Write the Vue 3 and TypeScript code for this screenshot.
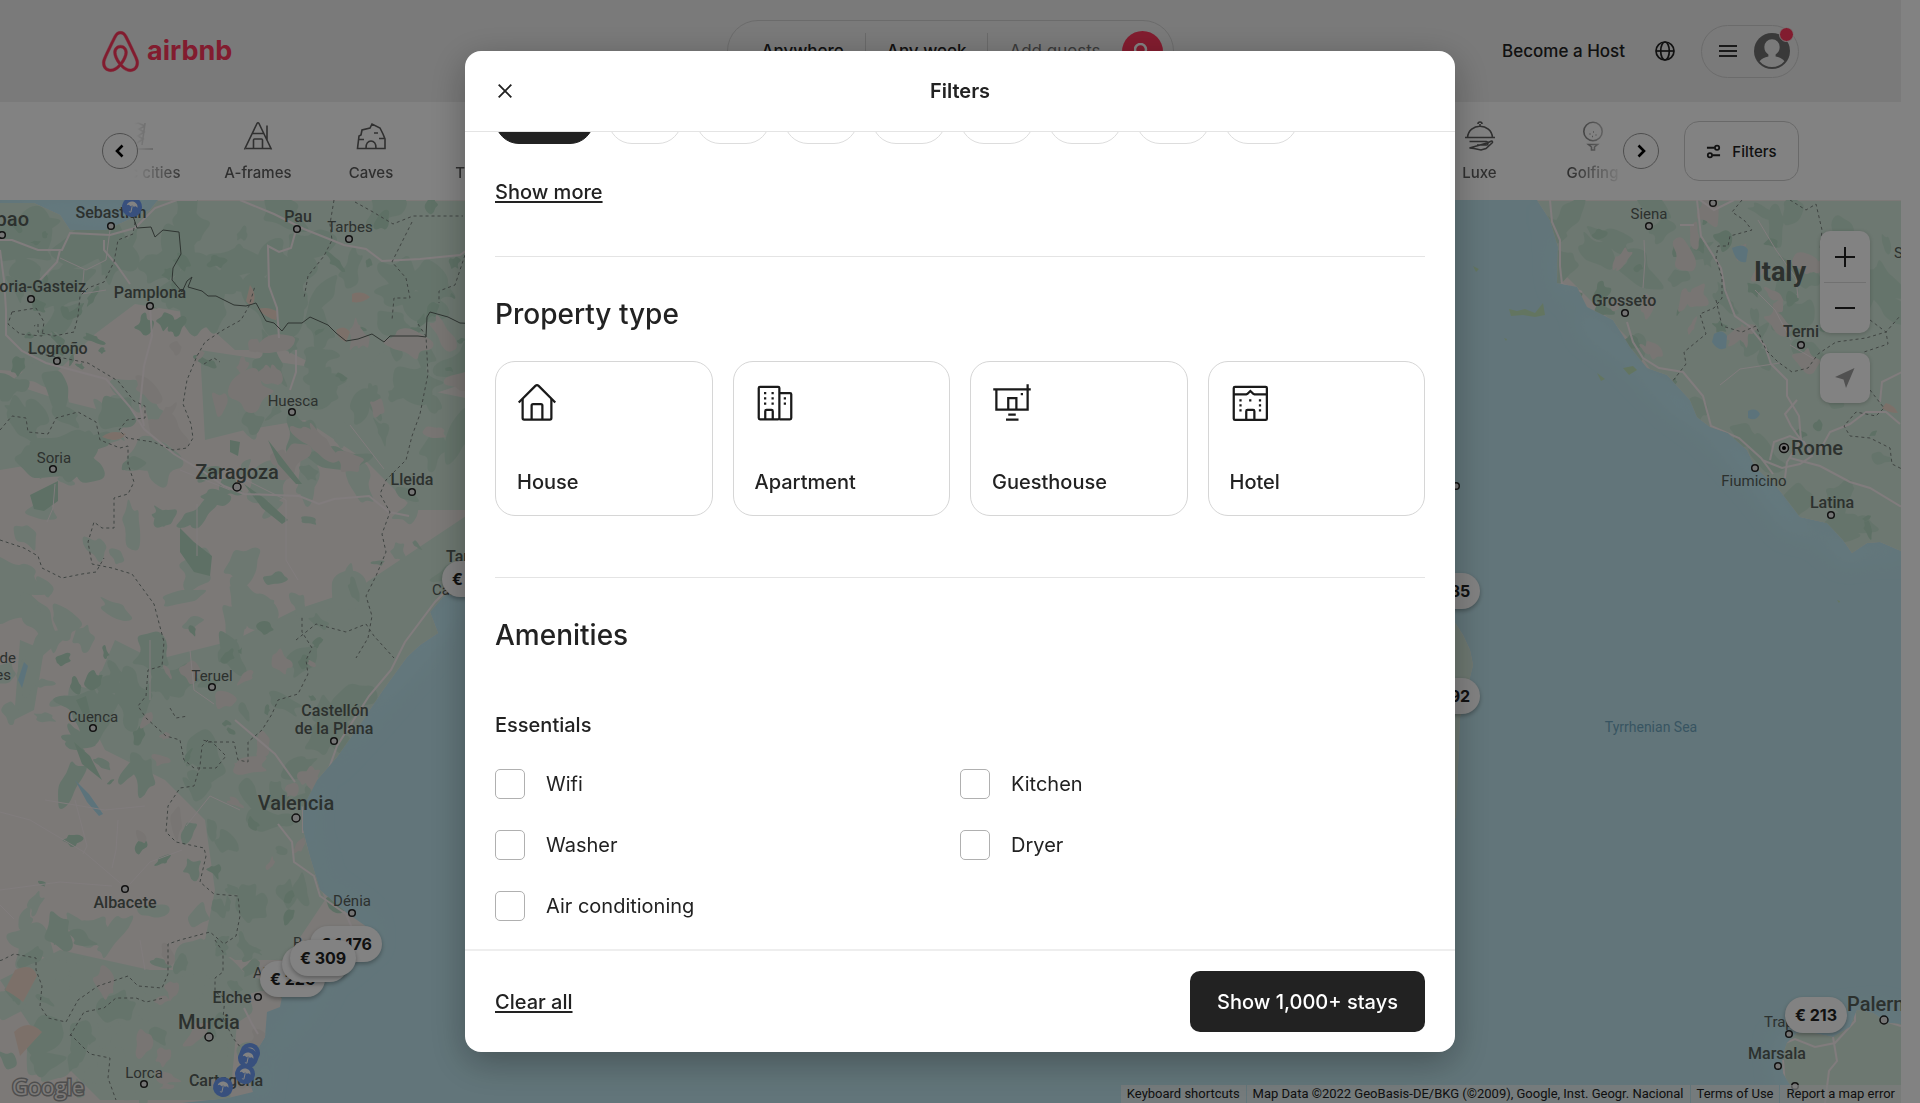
<script setup lang="ts">
import { ref } from 'vue'

type Label = { t: string; x: number; y: number; s?: 'sm' | 'md' | 'lg' | 'xl'; a?: 'start' | 'middle' | 'end' }

/* Small deterministic generator, so the map texture is the same on every load. */
function makeRandom(seed: number) {
  let state = seed
  return () => {
    state = (state * 1664525 + 1013904223) % 4294967296
    return state / 4294967296
  }
}

function blob(rand: () => number, cx: number, cy: number, rx: number, ry: number) {
  const n = 11
  const tilt = rand() * 3
  const pts = Array.from({ length: n }, (_, i) => {
    const angle = (i / n) * Math.PI * 2
    const r = 0.4 + rand() * 0.9
    const px = Math.cos(angle) * rx * r
    const py = Math.sin(angle) * ry * r
    return [
      cx + px * Math.cos(tilt) - py * Math.sin(tilt),
      cy + px * Math.sin(tilt) + py * Math.cos(tilt),
    ]
  })
  const mid = (a: number[], b: number[]) => `${((a[0] + b[0]) / 2).toFixed(1)} ${((a[1] + b[1]) / 2).toFixed(1)}`
  let d = `M${mid(pts[n - 1], pts[0])}`
  pts.forEach((p, i) => {
    d += `Q${p[0].toFixed(1)} ${p[1].toFixed(1)} ${mid(p, pts[(i + 1) % n])}`
  })
  return d + 'Z'
}

function scatter(seed: number, x: number, y: number, w: number, h: number, count: number, size: number) {
  const rand = makeRandom(seed)
  let d = ''
  for (let i = 0; i < count; i++) {
    const r = size * (0.4 + rand())
    d += blob(rand, x + rand() * w, y + rand() * h, r, r * (0.35 + rand() * 0.45))
  }
  return d
}

const woods = [
  { tone: 'meadow', d: scatter(5, 0, 370, 470, 260, 50, 26) },
  { tone: 'meadow', d: scatter(53, 0, 900, 290, 200, 36, 24) },
  { tone: 'meadow', d: scatter(67, 0, 600, 120, 120, 14, 20) },
  { tone: 'forest', d: scatter(11, 0, 200, 470, 120, 46, 26) },
  { tone: 'forest', d: scatter(23, 250, 310, 220, 150, 26, 24) },
  { tone: 'forest', d: scatter(31, 0, 380, 120, 100, 14, 26) },
  { tone: 'forest', d: scatter(41, 120, 460, 350, 180, 20, 14) },
  { tone: 'forest', d: scatter(47, 70, 650, 290, 130, 34, 22) },
  { tone: 'forest', d: scatter(49, 180, 780, 140, 190, 26, 15) },
  { tone: 'forest', d: scatter(59, 0, 930, 290, 160, 26, 18) },
  { tone: 'forest', d: scatter(61, 1550, 200, 350, 340, 66, 22) },
  { tone: 'deep', d: scatter(97, 0, 200, 470, 180, 40, 9) },
  { tone: 'deep', d: scatter(101, 1560, 200, 340, 330, 36, 9) },
  { tone: 'deep', d: scatter(103, 40, 620, 300, 300, 26, 8) },
  { tone: 'sand', d: scatter(71, 1600, 200, 220, 170, 26, 14) },
  { tone: 'sand', d: scatter(73, 130, 320, 340, 140, 24, 18) },
  { tone: 'sand', d: scatter(83, 130, 640, 200, 230, 22, 14) },
  { tone: 'sand', d: scatter(89, 100, 950, 180, 140, 14, 16) },
  { tone: 'clay', d: 'M250 285q6 8 4 16t-8 0zM258 309q10-3 20 3l-2 8q-10-2-18-11zM352 294q10-4 18 3-8 7-18 5zM336 330q8-6 14 2l-4 10q-9-4-10-12zM102 437q10-8 24-3-8 10-24 3zM15 970q18-8 22 6l-14 26q-10-8-18-12zM14 1032q14-14 28 0l-22 24zM1886 403q8 2 12 10-10 0-16-5z' },
]

const roads = [
  'M0 240h12l26 10 24 0 8-17 40 2 25-7 20-20 22-8h20M60 250l-3 12-17 18M0 250l4 30 2 30v25l16 16 24 12 60 16 24 28 14 22 30 25 30 18 20 14 20 8 55 2 20 8 15-5 35-3 20 16 20 4',
  'M104 240l0 10 12 14 14 20M150 306l2 30-8 30-4 40 4 20M240 200l34 14 30 15 40 16 22 4 16 12 38-2 40-4 20-14M296 230l-5 18-12 4-11-6 1 40 8 22 2 30M296 350l0 22-6 18',
  'M465 572l-30 30-30 40-14 28-22 26-32 50-10 28-14 34M303 807l0 26M278 824l14 18 2 20 20 14 6 20 26 18 6 14',
  'M244 1008l8 16 6 10M235 720l40 34 20 28',
]

const minorRoads = [
  'M60 258l26 12 20-10 4-30M84 270l-2 24 24-4M0 905l14 14M130 884l20-22 32-12M350 425l34 44M55 484l-2 24-6 14M140 940l5 30M180 470l50 20M150 640l0 60M190 650l4 40 20 14M45 800l60 10 40-4',
  'M0 812l30 8 54 32 42 36M75 800l12 46-4 8M240 810l-30-14-24 30M246 480l40 20 0 60 12 20M197 504l0 52M0 890l60-8 52 4M118 820l-2 30-4 18',
  'M1758 220l18 30 20 28 2 20M1644 240l1 20-2 28M1755 290l20 20 16 30M1720 385l20-16 40-6M1790 345l24 14',
]

const motorways = [
  'M1550 200l2 22 8 18 0 26 2 18 20 8M1697 200l4 36 20 32 4 22 10 26 14 10 16 20 6 18 16 16 0 16 12 20 2 24-14 22-2 16',
  'M1801 440l-10-14-6-12 12-14M1770 460l4-18 16-6 14 6 8 14-12 8-18 4-20-8M1627 322l6 20 10 16 16 10 24 4 20 24 8 30 28 12 22 20 12 16M1790 458l30 8 30 16 20 6 30 18 16 4M1820 450l10-18 20-8 16-12 20 0 14 12M1880 402l2-20 20-10M1680 225l14 0M1700 200l14 10 20-10',
  'M1785 1043l10-4 20 8 20-4 20-22 0-12M1833 1037l4 24-8 10-4 32M1783 1060l2 26M1888 1022l13 4',
]

const regions = [
  'M135 222l-2 12-15 6-4 22-10 20-16 6-8 8-2 20-4 16-20 4-16-4 0-8-4 2M12 312l24-4 8 14-2 14-22-2-12-10zM28 352l30 5 30 6 30 18 16 20 11 5 0 12-18 2-8 10 8 8 26 4 20 8 14-2 6-10-2-14-8-20 4-24 10-24 8-14 18-12 18-10 8-14 6-20M204 364l10-6 6 4',
  'M0 430l12-14 14 2 2 14 20 2 8-16 22-6 18 10 4 18 20 8 8-2 0 18 6 18-6 12-14 4 0 30-12 0-8-6-6 20 4 22 20 4 20 6 22 30 10 38-2 24-14 4-2 26-8 10 8 12 20 18 14 4 4 20 10 8 22 0 10-12-14-14-10-2M0 540l24 8 14 8 4 12 20 10 20-4 14-2 8-14M170 708l6 10 12-2M208 740l-6 6-2 20-6 20-14 2-12 18-2 26 10 10 28 6 2 8-6 26 14 12 24 2 2 20-4 20-12 8-14-12-30 8-12 4 0 30-6 14-24-2-10-10-30 10-20 14-12 22-18-4-8-12 2-20-6-16 0-12-22-4-12 6-14 4',
  'M208 742l26 0 4 18 10 2 0-20 14-12 10-16 6-14 20-6 10-20-2-14 6-12-10-16 0-16M334 200l-4 24 2 16-8 16-16 20-4 22M355 202l18 10 20 12 20-8 50 0M412 222l-20 40 14 16 4 20-16 0-2 22M465 255l-10 30-16 6 0 12M418 324l8 12 2 38-8 40-8 22-6 24-20 20-6 14 10 18-8 22 4 18-10 24-10 20 6 20-4 22-12 20 M296 640l20-16 30 8 20-8 8 12 20 22',
  'M70 1036l14-24 20-4 12-10 20 0 10 4 18-4M215 940l8 12 0 20-8 6 0 14 10 6-2 20 10 20 8 10M70 1034l20 20 20 4 -2 20 8 22',
  'M1742 200l-10 12 12 8 8 10-22 6-2 10-10 0-2 12 6 20 0 20-8 10-14 6 6 20-22 18 2 12-14 18M1716 300l6 26 20 6 14-6 10 24 12 12 14 10 16-4 10-14 18-12 30-4 20-6 14-16 14 8 20-10M1790 200l16 10 10-6 6 26-2 20M1870 320l16 12 2 12-24 8M1870 390l14 18-8 8-20-4-12 14 6 10 20 2 20 10 2 16 12 6',
]

const labels: Label[] = [
  { t: 'Bilbao', x: 29, y: 226, s: 'lg', a: 'end' },
  { t: 'Sebastián', x: 111, y: 218 },
  { t: 'Pau', x: 298, y: 222 },
  { t: 'Tarbes', x: 350, y: 232, s: 'sm' },
  { t: 'Vitoria-Gasteiz', x: 86, y: 292, a: 'end' },
  { t: 'Pamplona', x: 150, y: 298 },
  { t: 'Logroño', x: 58, y: 354 },
  { t: 'Huesca', x: 293, y: 406, s: 'sm' },
  { t: 'Soria', x: 54, y: 463, s: 'sm' },
  { t: 'Zaragoza', x: 237, y: 479, s: 'lg' },
  { t: 'Lleida', x: 412, y: 485 },
  { t: 'Tarragona', x: 446, y: 562, a: 'start' },
  { t: 'Cambrils', x: 432, y: 595, s: 'sm', a: 'start' },
  { t: 'de', x: 16, y: 663, s: 'sm', a: 'end' },
  { t: 'es', x: 11, y: 680, s: 'sm', a: 'end' },
  { t: 'Teruel', x: 212, y: 681, s: 'sm' },
  { t: 'Cuenca', x: 93, y: 722, s: 'sm' },
  { t: 'Castellón', x: 335, y: 716 },
  { t: 'de la Plana', x: 334, y: 734 },
  { t: 'Valencia', x: 296, y: 810, s: 'lg' },
  { t: 'Albacete', x: 125, y: 908 },
  { t: 'Dénia', x: 352, y: 906, s: 'sm' },
  { t: 'Benidorm', x: 293, y: 948, s: 'sm', a: 'start' },
  { t: 'Alicante', x: 253, y: 978, s: 'sm', a: 'start' },
  { t: 'Elche', x: 232, y: 1003 },
  { t: 'Murcia', x: 209, y: 1029, s: 'lg' },
  { t: 'Lorca', x: 144, y: 1078, s: 'sm' },
  { t: 'Cartagena', x: 226, y: 1086 },
  { t: 'Siena', x: 1649, y: 219, s: 'sm' },
  { t: 'Italy', x: 1780, y: 281, s: 'xl' },
  { t: 'Grosseto', x: 1624, y: 306 },
  { t: 'Terni', x: 1801, y: 337 },
  { t: 'S', x: 1894, y: 258, s: 'sm', a: 'start' },
  { t: 'Rome', x: 1791, y: 455, s: 'lg', a: 'start' },
  { t: 'Fiumicino', x: 1754, y: 486, s: 'sm' },
  { t: 'Latina', x: 1832, y: 508 },
  { t: 'Palermo', x: 1847, y: 1011, s: 'lg', a: 'start' },
  { t: 'Trapani', x: 1764, y: 1027, s: 'sm', a: 'start' },
  { t: 'Marsala', x: 1777, y: 1059 },
]

const towns = [
  [111, 226], [2, 235], [297, 229], [349, 239], [31, 299], [150, 306], [57, 361], [292, 412], [53, 469],
  [412, 492], [212, 687], [93, 728], [334, 741], [125, 889], [352, 913], [258, 997], [144, 1084],
  [1649, 226], [1713, 203], [1625, 313], [1801, 345], [1755, 468], [1831, 515], [1789, 1034], [1778, 1066],
  [1795, 1086], [1456, 486],
]
const cities = [[237, 487], [296, 818], [209, 1037], [1884, 1020]]
const beaches = [[132, 207], [250, 1053], [248, 1058], [245, 1074], [223, 1087]]

const prices = [
  { t: '€ 1,176', x: 310, y: 726 },
  { t: '€ 226', x: 260, y: 761 },
  { t: '€ 249', x: 282, y: 746 },
  { t: '€ 309', x: 290, y: 740 },
  { t: '€ 145', x: 442, y: 361 },
  { t: '€ 185', x: 1418, y: 373 },
  { t: '€ 192', x: 1418, y: 478 },
  { t: '€ 213', x: 1785, y: 797 },
]

const roomCounts = ['1', '2', '3', '4', '5', '6', '7', '8+']
const picked = ref('Any')

const propertyTypes = ['House', 'Apartment', 'Guesthouse', 'Hotel']
const chosenTypes = ref<string[]>([])
function toggleType(name: string) {
  chosenTypes.value = chosenTypes.value.includes(name)
    ? chosenTypes.value.filter((n) => n !== name)
    : [...chosenTypes.value, name]
}

const amenities = ['Wifi', 'Kitchen', 'Washer', 'Dryer', 'Air conditioning']
const checked = ref<string[]>([])
function clearAll() {
  checked.value = []
  chosenTypes.value = []
  picked.value = 'Any'
}
</script>

<template>
  <div class="page">
    <header class="top">
      <div class="side">
        <a class="brand" href="#">
          <svg viewBox="0 0 32 32" width="43" height="43" aria-hidden="true"><path d="M16 1c2.008 0 3.463.963 4.751 3.269l.533 1.025c1.954 3.83 6.114 12.54 7.1 14.836l.145.353c.667 1.591.91 2.472.96 3.396l.01.415.001.228c0 4.062-2.877 6.478-6.357 6.478-2.224 0-4.556-1.258-6.709-3.386l-.257-.26-.172-.179h-.011l-.176.185c-2.044 2.1-4.267 3.42-6.414 3.615l-.28.019-.267.006C5.377 31 2.5 28.584 2.5 24.522l.005-.469c.026-.928.23-1.768.83-3.244l.216-.524c.966-2.298 6.083-12.989 7.707-16.034C12.537 1.963 13.992 1 16 1zm0 2c-1.239 0-2.053.539-2.987 2.21l-.523 1.008c-1.926 3.776-6.06 12.43-7.031 14.692l-.345.836c-.427 1.071-.573 1.655-.605 2.24l-.009.33v.206C4.5 27.395 6.411 29 8.857 29c1.773 0 3.87-1.236 5.831-3.354-2.295-2.938-3.855-6.45-3.855-8.91 0-2.913 1.933-5.386 5.178-5.42 3.223.034 5.156 2.507 5.156 5.42 0 2.456-1.555 5.96-3.855 8.907C19.277 27.766 21.37 29 23.142 29c2.447 0 4.358-1.605 4.358-4.478l-.004-.411c-.019-.672-.17-1.296-.714-2.62l-.248-.6c-1.065-2.478-5.993-12.768-7.538-15.664C18.053 3.539 17.24 3 16 3zm.01 10.316c-2.01.021-3.177 1.514-3.177 3.42 0 1.797 1.18 4.58 2.955 7.044l.21.287.174-.234c1.73-2.385 2.898-5.066 2.989-6.875l.006-.221c0-1.906-1.167-3.4-3.156-3.421z" fill="currentColor" stroke="currentColor" stroke-width=".3" /></svg>
          <span>airbnb</span>
        </a>
      </div>
      <div class="search">
        <button type="button">Anywhere</button>
        <button type="button">Any week</button>
        <button type="button" class="guests">Add guests</button>
        <span class="go">
          <svg viewBox="0 0 32 32" width="16" height="16" aria-hidden="true"><path d="M13 24a11 11 0 1 0 0-22 11 11 0 0 0 0 22zm8-3 9 9" fill="none" stroke="#fff" stroke-width="5" /></svg>
        </span>
      </div>
      <div class="side end">
        <a class="host" href="#">Become a Host</a>
        <button class="globe" type="button" aria-label="Language">
          <svg viewBox="0 0 20 20" width="20" height="20"><g fill="none" stroke="currentColor" stroke-width="1.7"><circle cx="10" cy="10" r="9" /><ellipse cx="10" cy="10" rx="4.3" ry="9" /><path d="M1 10h18" /></g></svg>
        </button>
        <button class="account" type="button" aria-label="Account">
          <svg viewBox="0 0 18 14" width="18" height="14"><path d="M0 2h18M0 7h18M0 12h18" stroke="#333" stroke-width="2" /></svg>
          <svg viewBox="0 0 32 32" width="36" height="36"><circle cx="16" cy="16" r="16" fill="#717171" /><path d="M16 5.5a6.8 6.8 0 0 0-6.8 7c0 3 1.4 5.300 3.600 6.600v1.700c-3.500.700-6.100 2-7.800 4.200a14.200 14.200 0 0 0 22 0c-1.700-2.200-4.300-3.500-7.800-4.200v-1.700c2.200-1.300 3.600-3.600 3.600-6.600a6.800 6.800 0 0 0-6.800-7z" fill="#f0f0f0" /></svg>
          <i class="dot"></i>
        </button>
      </div>
    </header>

    <nav class="categories">
      <div class="scroller">
        <ul>
          <li>
            <svg viewBox="0 0 30 30"><path d="M3 28V5l12-3 7 3M22 2l-3 22M22 5l-6 3 5 3-6 4 5 3-6 4M15 28h15" /></svg>
            Iconic cities
          </li>
          <li>
            <svg viewBox="0 0 30 30"><path d="M1.500 28.500 14 2.500c.5-1 1.500-1 2 0l12.500 26M3 27.500h25M9 12.500h12M24 4.500v15M10.500 27.500v-8.500c0-.6.4-1 1-1h7c.6 0 1 .4 1 1v8.500" /></svg>
            A-frames
          </li>
          <li>
            <svg viewBox="0 0 30 30"><path d="M1.500 27.500 3 15l2-1 1-5 8-2 2-4 8 4 3 6 2 5v9.500zM10 27.500c-1-10 11-10 10 0M18 12h4M23 17.500h5M3 18.500h5" /></svg>
            Caves
          </li>
          <li>
            <svg viewBox="0 0 30 30"><path d="M15 28c2-8 0-12-2-16M13 12c-4-5-9-3-11 2 4-3 8-3 11-2zm0 0c6-5 11-1 12 4-4-4-8-5-12-4z" /></svg>
            Tropical
          </li>
          <li class="later">
            <svg viewBox="0 0 30 30"><path d="M0 16.500h30M2.500 16.500c1-15 24-15 25 0M15 5V3M13 3a2 2 0 1 1 4 0M4.500 20.500h17c2 0 2 3.500 0 3.500H12M22 22l4-1.800c1.500-.5 2 .8 1 1.800l-6 5.500-5 1.500-7-1.500-4.500-.5z" /></svg>
            Luxe
          </li>
          <li>
            <svg viewBox="0 0 30 30"><circle cx="15" cy="10.500" r="9.200" /><path d="M10.500 23.500h9l-3 2.500v3h-3v-3z" /><path d="M11.500 13h1M15 11h1M17.500 14h1M14 15.500h1" /></svg>
            Golfing
          </li>
        </ul>
        <button class="arrow prev" type="button" aria-label="Previous"><svg viewBox="0 0 14 14" width="14" height="14"><path d="M9.500 1.500 4 7l5.500 5.500" /></svg></button>
        <button class="arrow next" type="button" aria-label="Next"><svg viewBox="0 0 14 14" width="14" height="14"><path d="M4.500 1.500 10 7l-5.500 5.500" /></svg></button>
      </div>
      <button class="filters" type="button">
        <svg viewBox="0 0 16 16" width="15" height="15"><g fill="none" stroke="currentColor" stroke-width="1.900"><path d="M1 4h8M7 12h8" /><circle cx="11.800" cy="4" r="2.300" /><circle cx="4.200" cy="12" r="2.300" /></g></svg>
        Filters
      </button>
    </nav>

    <main class="map">
      <svg class="chart" viewBox="0 200 1901 903" preserveAspectRatio="xMinYMin slice">
        <defs>
          <clipPath id="land">
            <path d="M0 203h34l26 12 10 15 36 0 44-20 8-10H475V572l-32 25-13 15 8 21-18 12-13 12-24 33-20 30-26 37-20 23-14 27 0 23 7 27 10 33 27 23 20 14-20 30-50 20-15 20-2 10-13 5-2 25-8 13-14 4-1 12 6 12 5 14-25 6-46 5H0z" />
            <path d="M1537 200l13 20 8 27-1 36 20 4 10 20 26 13 17 27 17 21 20 7 23 25 7 17 13 10 18 6 19 17 8 17 22 20 23 30 27 6 16 17 9 13 15-10 13-1 21 9V200z" />
            <path d="M1797 1033l-10 10-5 14 1 16 10 17 14 13h94v-79l-13-1-15-10-16-3-7 17-17 10-20-4z" />
            <path d="M1450 615l13 20 7 15 3 15-3 12-4 20-6 20-4 100-6 10z" />
          </clipPath>
          <filter id="soften" x="-5%" y="-5%" width="110%" height="110%"><feGaussianBlur stdDeviation="10" /></filter>
        </defs>
        <rect y="200" width="1901" height="903" class="sea" />
        <path class="shallow" filter="url(#soften)" d="M0 200h160l-50 32-60-8zM465 572l-60 85-60 90-30 40-6 40 18 62 40 36-60 90-40 40-10 45h4l8-50 50-60 56-50-8-24-44-34-20-56 4-30 50-60 70-80 30-40zM1537 201l18 40 2 42 26 26 44 38 20 24 44 28 20 26 36 24 34 36 22 38 50 24 48 0v10l-30-2-24 8-30-26-30-6-30-40-50-56-36-26-50-50-36-26-14-60zM1780 1100l-6-60 30-16 40-12 40-4 17 10v60z" />
        <g clip-path="url(#land)">
          <rect y="200" width="1901" height="903" class="soil" />
          <path class="meadow" d="M0 201H475V380l-60 20-70-20-60-30-50 0-40-36-60-10-40 30-40 40L0 370zM0 380l60 20 40 10 20 30-60 20L0 470zM200 350l130 20 145 30v110l-60 0-50-50-60-40-60 10-40 10zM475 510v120l-90 80-50 70-30 60 20 60-40 60-50 0-30-20 10-50-10-70-40-40-60-30-20-40 30-70 40 20 80-20 60-30 60-20zM0 980l60-30 90 20 60 0 30 20-10 110H100l-60-60zM20 640l24 10-10 60-20 10zM1530 201h371v360h-120l-150-220-90-90zM1770 1000h131v103h-131zM1440 600h40v230h-40z" />
          <path v-for="(wood, i) in woods" :key="i" :class="wood.tone" :d="wood.d" />
          <path class="deep" d="M30 495l28-14 0 20-14 10-10-2zM230 440l10 2-2 14-8-4zM180 528l14 14 18 14-2 20-16-4-14-20zM268 440l14 18 20 26-6 0-18-20zM244 484l20 14 24 22-6 4-20-16zM76 700l10-4 4 16-6 4zM74 742l16 14 12 24-20-16z" />
          <path class="lake" d="M1732 248q12-6 16 2l-2 12q-10 2-14-14zM1714 334q8-6 13 2l-1 12q-8 4-14-6zM1748 411q8-4 12 3-4 8-12 4zM75 780l14 14 14 20-4 2-12-14zM18 680l6-18 4 4-6 22z" />
          <path v-for="(road, i) in minorRoads" :key="'n' + i" class="road thin" :d="road" />
          <path v-for="(road, i) in roads" :key="'r' + i" class="road" :d="road" />
          <path v-for="(road, i) in motorways" :key="'m' + i" class="road" :d="road" />
          <path v-for="(edge, i) in regions" :key="'e' + i" class="region" :d="edge" />
          <path class="border" d="M133 216l4 12 14-1 4 10 8-7 16 2 2 22-8 14-1 12 10 12 5-11 5-4-4 10 14 4 6 5 8 0 18 9 12 1 10-3 10 18 8 2 8 8 6-8 14 0 8-6 18 8 8 8 10 8 12-2 14-5 12 8 6-6 28 0 8 1 1-20 3-5 18 5 12 6 22 1" />
        </g>
        <path class="islet" d="M1509 309l8 2 8-2 10 4 8-10 2 12-10 2-12-2-12 1zM1473 266l6 3-3 3zM1623 368l10-2 4 4-8 5zM1597 373l8 6-4 2zM1504 338l3 1-1 2zM1837 600l3 1-1 2z" />
        <g class="town">
          <circle v-for="(p, i) in towns" :key="i" :cx="p[0]" :cy="p[1]" r="3.300" />
          <circle v-for="(p, i) in cities" :key="'c' + i" :cx="p[0]" :cy="p[1]" r="4" />
          <circle cx="1784" cy="448" r="4.500" />
        </g>
        <circle cx="1784" cy="448" r="2" />
        <text v-for="label in labels" :key="label.t + label.x" :x="label.x" :y="label.y" :class="['label', label.s ?? 'md']" :text-anchor="label.a ?? 'middle'">{{ label.t }}</text>
        <text class="label water" x="1651" y="732" text-anchor="middle">Tyrrhenian Sea</text>
        <g v-for="(p, i) in beaches" :key="'b' + i" :transform="`translate(${p[0]} ${p[1]}) rotate(12)`">
          <circle r="10" class="beach" />
          <path class="parasol" d="M-5.500-.5c.5-6.500 10.500-6.500 11 0l-2-1-1.800 1L0-1.500l-1.700 1-1.800-1z" />
          <path class="pole" d="M0-1v5.500q-.5 1.500-2 .5" />
        </g>
        <text class="google" x="12" y="1095">Google</text>
      </svg>

      <button v-for="p in prices" :key="p.t" class="price" type="button" :style="{ left: p.x + 'px', top: p.y + 'px' }">{{ p.t }}</button>

      <div class="controls">
        <div class="zoom">
          <button type="button" aria-label="Zoom in"><svg viewBox="0 0 20 20" width="20" height="20"><path d="M0 10h20M10 0v20" /></svg></button>
          <button type="button" aria-label="Zoom out"><svg viewBox="0 0 20 20" width="20" height="20"><path d="M0 10h20" /></svg></button>
        </div>
        <button class="locate" type="button" aria-label="My location"><svg viewBox="0 0 20 20" width="20" height="20"><path d="M19.500 0 0 9l8.500 2.500L11 20z" /></svg></button>
      </div>

      <footer class="credits">
        <a href="#">Keyboard shortcuts</a>
        <span>Map Data ©2022 GeoBasis-DE/BKG (©2009), Google, Inst. Geogr. Nacional</span>
        <a href="#">Terms of Use</a>
        <a href="#">Report a map error</a>
      </footer>
    </main>
  </div>

  <div class="overlay">
    <section class="modal" role="dialog" aria-labelledby="modal-title">
      <header class="modal-head">
        <button class="close" type="button" aria-label="Close"><svg viewBox="0 0 14 14" width="14" height="14"><path d="M.7.7l12.600 12.600M13.300.7.7 13.300" stroke="#222" stroke-width="1.900" /></svg></button>
        <h1 id="modal-title">Filters</h1>
      </header>

      <div class="modal-body">
        <section class="rooms">
          <div class="chips">
            <button class="chip first" :class="{ on: picked === 'Any' }" type="button" aria-label="Any" @click="picked = 'Any'"></button>
            <button v-for="n in roomCounts" :key="n" class="chip" :class="{ on: picked === n }" type="button" :aria-label="n" @click="picked = n"></button>
          </div>
          <button class="link" type="button">Show more</button>
        </section>

        <section class="types">
          <h2>Property type</h2>
          <div class="cards">
            <button v-for="name in propertyTypes" :key="name" class="card" type="button" :aria-pressed="chosenTypes.includes(name)" @click="toggleType(name)">
              <svg viewBox="0 0 32 32" width="40" height="40" aria-hidden="true">
                <g v-if="name === 'House'">
                  <path d="M1.400 15.600 14.700 2.300a1.900 1.900 0 0 1 2.600 0l13.300 13.300" />
                  <path d="M4.500 12.700V28a1.200 1.200 0 0 0 1.200 1.200h20.600a1.200 1.200 0 0 0 1.200-1.200V12.700" />
                  <path d="M11.700 29V18a1.200 1.200 0 0 1 1.200-1.200h6.200a1.200 1.200 0 0 1 1.200 1.200v11" />
                </g>
                <g v-else-if="name === 'Apartment'">
                  <rect x="3" y="3" width="16.500" height="26" rx="1" />
                  <path d="M19.500 8H28a1 1 0 0 1 1 1v19a1 1 0 0 1-1 1h-8.500M8.200 29v-6.500a1 1 0 0 1 1-1h4a1 1 0 0 1 1 1V29" />
                  <path class="pane" d="M7.200 7.200h1.800v1.800H7.200zm6 0H15v1.800h-1.800zm-6 4.200h1.800v1.800H7.200zm6 0H15v1.800h-1.800zm-6 4.200h1.800v1.800H7.200zm6 0H15v1.800h-1.800zm9.800-4.200h1.800v1.800H23zm0 4.200h1.800v1.800H23z" />
                </g>
                <g v-else-if="name === 'Guesthouse'">
                  <path d="M1 5h30M3.500 5v16.300h25V1M13 21v-9h6.500v9M13 25.200h6M11.200 29.200h10" />
                  <path class="pane" d="M23 8h1.800v1.800H23z" />
                </g>
                <g v-else>
                  <rect x="3" y="3" width="26.500" height="26.500" rx="1" />
                  <path d="M3 9h10l1-.300 2.300-2.300 2.300 2.300 1 .300h10M13 29v-6.500a1 1 0 0 1 1-1h4.500a1 1 0 0 1 1 1V29" />
                  <path class="pane" d="M7.500 13h1.800v1.800H7.500zm7.800 0h1.800v1.800h-1.800zm7.800 0h1.800v1.800h-1.800zM7.500 17h1.800v1.800H7.500zm15.600 0h1.800v1.800h-1.800zM7.500 21h1.800v1.800H7.500zm15.600 0h1.800v1.800h-1.800z" />
                </g>
              </svg>
              {{ name }}
            </button>
          </div>
        </section>

        <section class="amenities">
          <h2>Amenities</h2>
          <h3>Essentials</h3>
          <div class="options">
            <label v-for="name in amenities" :key="name"><input v-model="checked" type="checkbox" :value="name" />{{ name }}</label>
          </div>
        </section>
      </div>

      <footer class="modal-foot">
        <button class="link" type="button" @click="clearAll">Clear all</button>
        <button class="show" type="button">Show 1,000+ stays</button>
      </footer>
    </section>
  </div>
</template>

<style>
body {
  margin: 0;
  background: #fff;
}
</style>

<style scoped>
.page,
.overlay {
  font-family: Inter, 'Liberation Sans', sans-serif;
  color: #222;
}
.page *,
.overlay * {
  box-sizing: border-box;
}
.page {
  box-sizing: border-box;
  display: flex;
  flex-direction: column;
  height: 100vh;
  padding-right: 19px;
  overflow: hidden;
}
button {
  padding: 0;
  border: 0;
  background: none;
  color: inherit;
  font: inherit;
  cursor: pointer;
}
a {
  color: inherit;
  text-decoration: none;
}

.top {
  display: flex;
  align-items: center;
  height: 102px;
  padding: 0 102px;
  background: #efefef;
  font-size: 17px;
  font-weight: 500;
}
.side {
  display: flex;
  flex: 1;
  align-items: center;
}
.end {
  justify-content: flex-end;
}
.brand {
  display: flex;
  align-items: center;
  gap: 5px;
  margin-left: -3px;
  color: #ff385c;
  font-size: 27px;
  font-weight: 700;
  line-height: 36px;
}
.search {
  display: flex;
  align-items: center;
  height: 62px;
  padding: 0 10px 0 0;
  border: 1px solid #d2d2d2;
  border-radius: 31px;
}
.search button {
  height: 36px;
  padding: 0 21px;
  border-right: 1px solid #cfcfcf;
}
.search button:first-child {
  padding-left: 33px;
}
.search .guests {
  border: 0;
  color: #717171;
  font-weight: 400;
}
.go {
  display: grid;
  place-items: center;
  width: 41px;
  height: 41px;
  border-radius: 50%;
  background: #ff385c;
}
.globe {
  display: flex;
  margin: 0 26px 0 30px;
}
.account {
  position: relative;
  display: flex;
  align-items: center;
  gap: 17px;
  height: 53px;
  padding: 0 8px 0 17px;
  border: 1px solid #d2d2d2;
  border-radius: 27px;
}
.dot {
  position: absolute;
  top: 1px;
  right: 4px;
  width: 15px;
  height: 15px;
  border: 1px solid #efefef;
  border-radius: 50%;
  background: #ff385c;
}

.categories {
  display: flex;
  align-items: center;
  gap: 25px;
  height: 98px;
  padding: 0 102px;
  font-size: 15px;
  font-weight: 500;
}
.scroller {
  position: relative;
  flex: 1;
  min-width: 0;
}
.scroller ul {
  display: flex;
  gap: 42px;
  margin: 0;
  padding: 2px 31px 0 0;
  overflow: hidden;
  list-style: none;
  mask-image: linear-gradient(90deg, transparent 32px, #000 84px, #000 calc(100% - 90px), transparent calc(100% - 34px));
}
.scroller li {
  display: flex;
  flex: none;
  flex-direction: column;
  align-items: center;
  gap: 12px;
  min-width: 71px;
  color: #5e5e5e;
  line-height: 20px;
}
.scroller li:first-child {
  margin-left: -7px;
}
.scroller .later {
  margin-left: auto;
}
.scroller li svg {
  width: 30px;
  height: 30px;
  fill: none;
  stroke: currentColor;
  stroke-width: 1.6px;
}
.arrow {
  position: absolute;
  top: 14px;
  display: grid;
  place-items: center;
  width: 36px;
  height: 36px;
  border: 1px solid #9a9a9a;
  border-radius: 50%;
}
.arrow path {
  fill: none;
  stroke: #000;
  stroke-width: 2.6px;
}
.prev {
  left: 0;
}
.next {
  right: 0;
}
.filters {
  display: flex;
  align-items: center;
  justify-content: center;
  gap: 11px;
  width: 115px;
  height: 60px;
  border: 1px solid #cfcfcf;
  border-radius: 15px;
}

.map {
  position: relative;
  flex: 1;
  min-height: 0;
  overflow: hidden;
}
.chart {
  display: block;
  width: 100%;
  height: 100%;
}
.sea {
  fill: #c0e6ef;
}
.shallow {
  fill: #c5edf8;
}
.soil {
  fill: #f3eeea;
}
.meadow {
  fill: #d6ebdd;
}
.forest {
  fill: #c7e4d2;
}
.deep {
  fill: #b8dcc6;
}
.sand {
  fill: #ece6e1;
}
.clay {
  fill: #f4dccf;
}
.lake {
  fill: #b4e2f2;
}
.islet {
  fill: #c3e6bd;
}
.road {
  fill: none;
  stroke: #fdf3f5;
  stroke-width: 2px;
}
.thin {
  stroke-width: 1px;
}
.region {
  fill: none;
  stroke: #7d8682;
  stroke-width: 1px;
  stroke-dasharray: 3 3;
}
.border {
  fill: none;
  stroke: #5c6761;
  stroke-width: 1px;
}
.town circle {
  fill: #e6e6e6;
  stroke: #222;
  stroke-width: 1.500px;
}
.label {
  fill: #57605b;
  font-family: Roboto, sans-serif;
  font-size: 16px;
  font-weight: 500;
}
.label.sm {
  font-size: 15px;
  font-weight: 400;
}
.label.lg {
  font-size: 20px;
}
.label.xl {
  font-size: 27px;
  font-weight: 700;
}
.label.water {
  fill: #6fa6c0;
  font-size: 14px;
  font-weight: 400;
}
.beach {
  fill: #6f9ef5;
}
.parasol {
  fill: #fff;
}
.pole {
  fill: none;
  stroke: #fff;
}
.google {
  fill: #f4efec;
  stroke: #9a9a9a;
  stroke-width: 3px;
  paint-order: stroke;
  font-family: 'Open Sans', sans-serif;
  font-size: 22px;
  font-weight: 500;
}
.price {
  position: absolute;
  height: 36px;
  padding: 0 10px;
  border-radius: 18px;
  background: #fff;
  box-shadow: 0 2px 4px rgba(0, 0, 0, 0.3);
  font-size: 16px;
  font-weight: 700;
  white-space: nowrap;
}
.controls {
  position: absolute;
  top: 31px;
  right: 31px;
  display: flex;
  flex-direction: column;
  gap: 20px;
  width: 50px;
}
.zoom,
.locate {
  display: grid;
  border-radius: 10px;
  background: #fff;
  box-shadow: 0 1px 4px rgba(0, 0, 0, 0.2);
}
.zoom {
  padding: 0 4px;
}
.zoom button {
  display: grid;
  place-items: center;
  height: 51px;
}
.zoom button + button {
  border-top: 1px solid #ddd;
}
.zoom path {
  stroke: #222;
  stroke-width: 2px;
}
.locate {
  place-items: center;
  height: 50px;
}
.locate path {
  fill: #a0a0a0;
}
.credits {
  position: absolute;
  right: 0;
  bottom: 0;
  display: flex;
  gap: 1px;
  font-family: Roboto, sans-serif;
  font-size: 13px;
  line-height: 18px;
  white-space: nowrap;
}
.credits > * {
  padding: 0 6px;
  background: rgba(245, 245, 245, 0.7);
}

.overlay {
  position: fixed;
  inset: 0;
  display: flex;
  justify-content: center;
  padding: 51px 24px;
  box-sizing: border-box;
  background: rgba(0, 0, 0, 0.49);
}
.modal {
  display: flex;
  flex-direction: column;
  width: 100%;
  max-width: 990px;
  overflow: hidden;
  border-radius: 16px;
  background: #fff;
  box-shadow: 0 10px 36px rgba(0, 0, 0, 0.3);
  font-size: 20px;
  line-height: 24px;
}
.modal-head {
  display: grid;
  grid-template-columns: 1fr auto 1fr;
  align-items: center;
  height: 81px;
  padding: 0 30px;
  border-bottom: 1px solid #e4e4e4;
}
.modal-head h1 {
  margin: 0;
  font-size: 20px;
  font-weight: 600;
}
.close {
  display: grid;
  place-items: center;
  justify-self: start;
  width: 20px;
  height: 22px;
}
.modal-body {
  flex: 1;
  min-height: 0;
  padding: 0 30px;
  overflow: hidden;
}
.rooms {
  margin-top: -36px;
  padding-bottom: 52px;
}
.chips {
  display: flex;
  gap: 14px;
  margin-bottom: 36px;
}
.chip {
  width: 74px;
  height: 48px;
  border: 1px solid #ddd;
  border-radius: 24px;
}
.chip.first {
  width: 99px;
}
.chip.on {
  border-color: #222;
  background: #222;
}
.link {
  display: block;
  font-weight: 500;
  text-decoration: underline;
  text-decoration-thickness: 2px;
  text-underline-offset: 2px;
}
.types,
.amenities {
  padding-top: 39px;
  border-top: 1px solid #e4e4e4;
}
.types {
  padding-bottom: 61px;
}
h2 {
  margin: 0;
  font-size: 28px;
  font-weight: 500;
  line-height: 36px;
}
.cards {
  display: grid;
  grid-template-columns: repeat(4, 1fr);
  gap: 20px;
  margin-top: 29px;
}
.card {
  display: flex;
  flex-direction: column;
  align-items: flex-start;
  justify-content: space-between;
  height: 155px;
  padding: 21px;
  border: 1px solid #d6d6d6;
  border-radius: 20px;
  font-weight: 500;
}
.card svg {
  fill: none;
  stroke: #1a1a1a;
  stroke-width: 1.8px;
}
.card .pane {
  fill: #1a1a1a;
  stroke: none;
}
h3 {
  margin: 60px 0 32px;
  font-size: 20px;
  font-weight: 500;
}
.options {
  display: grid;
  grid-template-columns: 1fr 1fr;
  row-gap: 31px;
}
.options label {
  display: flex;
  align-items: center;
  gap: 21px;
  font-weight: 400;
}
.options input {
  width: 30px;
  height: 30px;
  margin: 0;
  border: 1px solid #b0b0b0;
  border-radius: 5px;
  appearance: none;
  background: #fff;
}
.options input:checked {
  background: #222;
}
.modal-foot {
  display: flex;
  align-items: center;
  justify-content: space-between;
  height: 103px;
  padding: 0 30px;
  border-top: 2px solid #eee;
}
.show {
  width: 235px;
  height: 61px;
  border-radius: 10px;
  background: #222;
  color: #fff;
  font-weight: 500;
}
</style>
